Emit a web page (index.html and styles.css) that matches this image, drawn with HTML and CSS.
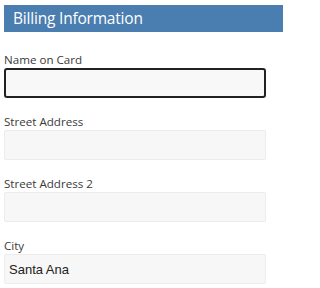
FILE: index.html
```html
<!DOCTYPE html>
<html>
<head>
<meta charset="utf-8">
<link rel="stylesheet" href="styles.css">
</head>
<body>
<div class="panel">
  <div class="header">Billing Information</div>
  <form class="form">
    <div class="field">
      <label class="label">Name on Card</label>
      <input class="input focused" type="text" value="">
    </div>
    <div class="field">
      <label class="label">Street Address</label>
      <input class="input" type="text" value="">
    </div>
    <div class="field">
      <label class="label">Street Address 2</label>
      <input class="input" type="text" value="">
    </div>
    <div class="field">
      <label class="label">City</label>
      <input class="input" type="text" value="Santa Ana">
    </div>
  </form>
</div>
</body>
</html>
```
FILE: styles.css
```css
html, body {
  margin: 0;
  padding: 0;
  background: #ffffff;
}
.panel {
  width: 279px;
  padding: 5px 0 0 4px;
}
.header {
  height: 27px;
  background: #4a7db0;
  color: #ffffff;
  font-family: "Open Sans", sans-serif;
  font-size: 15.5px;
  letter-spacing: -0.2px;
  line-height: 27px;
  padding-left: 9px;
  box-sizing: border-box;
}
.form {
  display: flex;
  flex-direction: column;
  gap: 16px;
  margin-top: 20px;
}
.field {
  display: flex;
  flex-direction: column;
}
.label {
  font-family: "Open Sans", sans-serif;
  font-size: 11.6px;
  line-height: 16px;
  color: #3a3a3a;
}
.input {
  width: 262px;
  height: 30px;
  box-sizing: border-box;
  margin: 0;
  border: 1px solid #ececec;
  border-radius: 2px;
  background: #f7f7f7;
  padding: 0 4px;
  font-family: "Liberation Sans", Arial, sans-serif;
  font-size: 13px;
  color: #222222;
  outline: none;
}
.input.focused {
  border: 2px solid #222222;
  border-radius: 3px;
  background: #f8f8f8;
}
```
